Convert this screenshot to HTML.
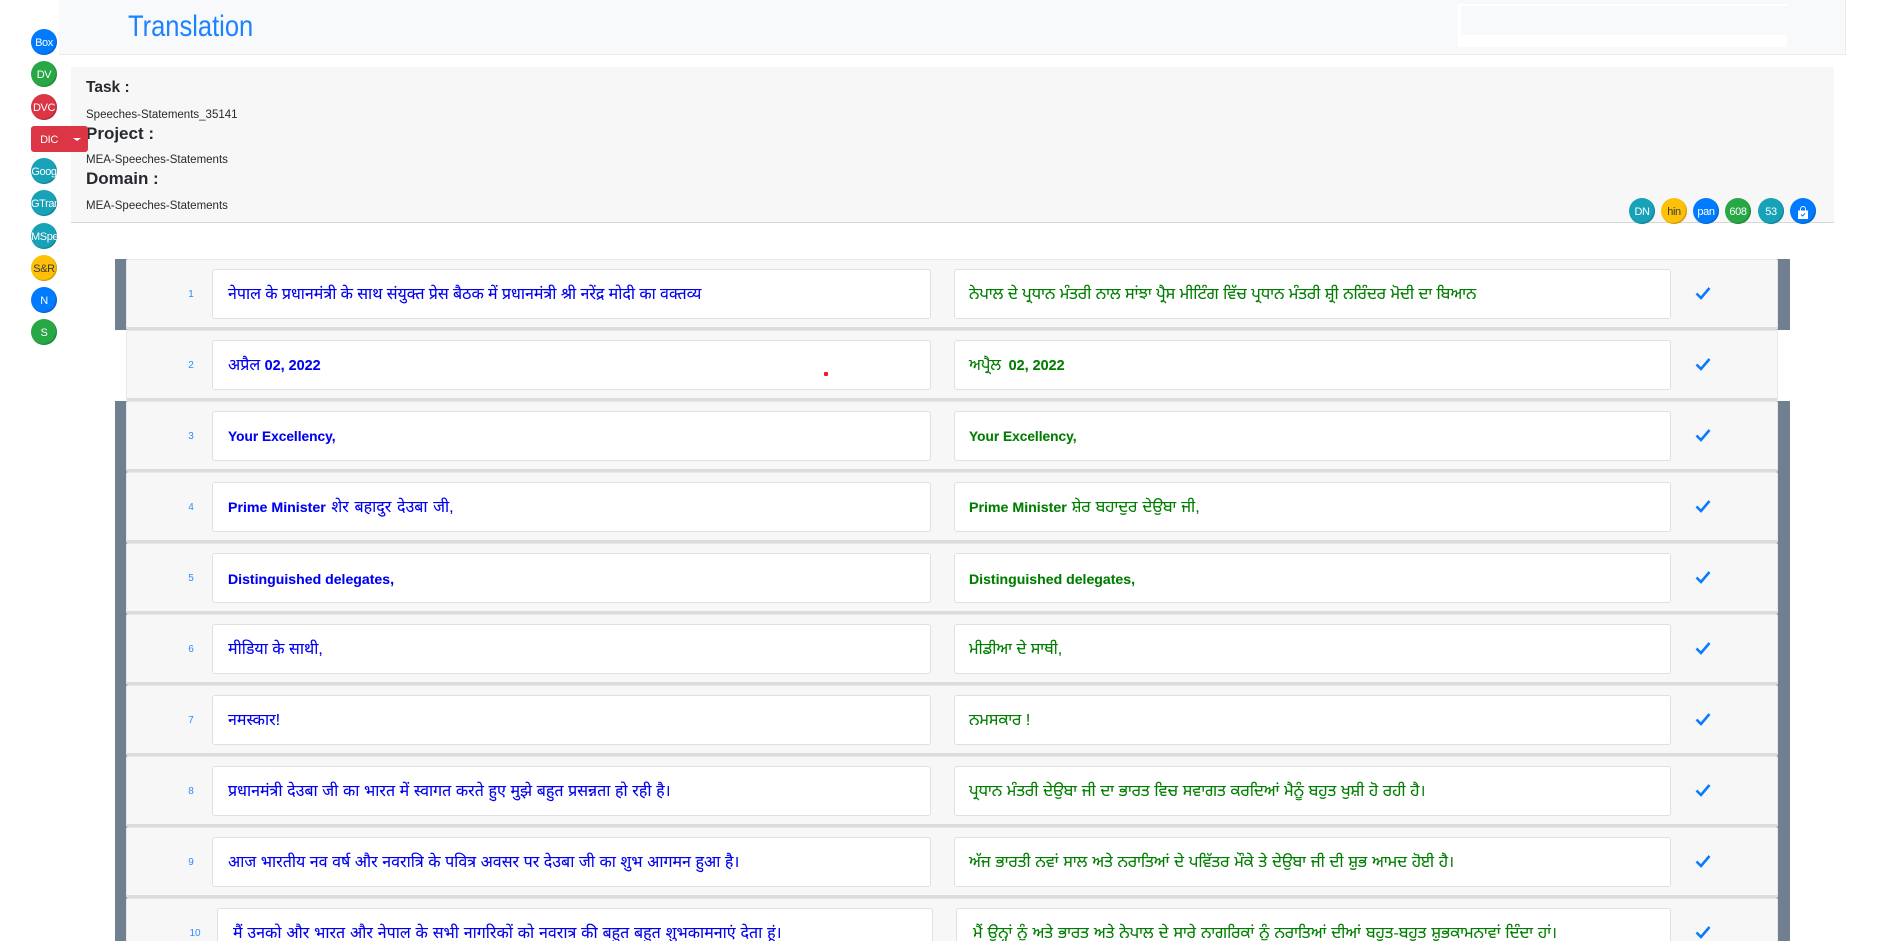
<!DOCTYPE html>
<html lang="hi">
<head>
<meta charset="utf-8">
<title>Translation</title>
<style>
html,body{margin:0;padding:0;background:#fff;width:1902px;height:941px;overflow:hidden}
body{position:relative;font-family:"Liberation Sans","DejaVu Sans",sans-serif;color:#212529}
.a{position:absolute;white-space:nowrap}
#nav{left:59px;top:0;width:1786px;height:54px;background:#f8f9fa;border-right:1px solid #e9ebee;border-bottom:1px solid #e9ebee}
#title{left:128px;top:8px;font-size:30px;line-height:38px;color:#1c82ff;transform:scaleX(.85);transform-origin:0 0}
#wb{left:1458px;top:4px;width:329px;height:43px;background:#fff}
#wi{left:1461px;top:6px;width:326px;height:29px;background:#f8f9fa}
#panel{left:71px;top:67px;width:1763px;height:156px;background:#f7f7f7;border-bottom:1px solid #d6d6d6;box-sizing:border-box}
.h{left:86px;font-size:17px;line-height:22px;font-weight:bold;color:#262a2e}
.v{left:86px;font-size:11.5px;line-height:16px;color:#262a2e}
.c{width:26px;height:26px;border-radius:50%;text-align:center;line-height:28px;font-size:11px;color:#fff;overflow:hidden;box-shadow:inset -1px -1px 1px rgba(0,0,0,.22);letter-spacing:-.4px}
.bl{background:#007bff}.gr{background:#28a745}.rd{background:#dc3545}.tl{background:#17a2b8}.yl{background:#ffc107;color:#3b3b3b}
#dic{left:31px;top:126px;width:57px;height:26px;border-radius:3px;background:#dc3545;color:#fff;font-size:11px;line-height:29px}
#dic span{position:absolute;left:4px;width:28px;text-align:center;letter-spacing:-.4px}
#dic i{position:absolute;left:42px;top:12px;border-left:4px solid transparent;border-right:4px solid transparent;border-top:3px solid #fff}
.band2{left:115px;width:1675px;background:#708090}
.card{left:126px;width:1652px;height:71px;box-sizing:border-box;background:#f7f7f7;border:1px solid #e8e8e8;border-bottom:3px solid #dcdcdc;border-radius:2px}
.box{height:50px;box-sizing:border-box;background:#fff;border:1px solid #e0e0e0;border-radius:3px}
.n{width:20px;text-align:center;font-size:10px;line-height:14px;color:#2a8cff}
.t{font-size:16px;line-height:24px;font-weight:normal;-webkit-text-stroke:.08px}
.b{font-weight:bold;font-size:14.1px}
.hi{color:#0000f0;font-family:"Liberation Sans","Noto Sans Devanagari","Lohit Devanagari","DejaVu Sans",sans-serif}
.pa{color:#007d00;font-family:"Liberation Sans","Noto Sans Gurmukhi","Lohit Gurmukhi","DejaVu Sans",sans-serif}
.ck{width:16px;height:14px}
#dot{left:824px;top:372px;width:4px;height:4px;background:#ee1c25;border-radius:1px}
</style>
</head>
<body>
<div class="a" id="nav"></div>
<div class="a" id="title">Translation</div>
<div class="a" id="wb"></div><div class="a" id="wi"></div>

<div class="a" id="panel"></div>
<div class="a h" style="top:77px;font-size:15.5px">Task :</div>
<div class="a v" style="top:107px">Speeches-Statements_35141</div>
<div class="a h" style="top:123px">Project :</div>
<div class="a v" style="top:152px">MEA-Speeches-Statements</div>
<div class="a h" style="top:168px">Domain :</div>
<div class="a v" style="top:198px">MEA-Speeches-Statements</div>

<div class="a c bl" style="left:31px;top:29px">Box</div>
<div class="a c gr" style="left:31px;top:61px">DV</div>
<div class="a c rd" style="left:31px;top:94px">DVC</div>
<div class="a" id="dic"><span>DIC</span><i></i></div>
<div class="a c tl" style="left:31px;top:158px">Goog</div>
<div class="a c tl" style="left:31px;top:190px">GTran</div>
<div class="a c tl" style="left:31px;top:223px">MSpell</div>
<div class="a c yl" style="left:31px;top:255px">S&amp;R</div>
<div class="a c bl" style="left:31px;top:287px">N</div>
<div class="a c gr" style="left:31px;top:319px">S</div>

<div class="a c tl" style="left:1629px;top:198px">DN</div>
<div class="a c yl" style="left:1661px;top:198px">hin</div>
<div class="a c bl" style="left:1693px;top:198px">pan</div>
<div class="a c gr" style="left:1725px;top:198px">608</div>
<div class="a c tl" style="left:1758px;top:198px">53</div>
<div class="a c bl" style="left:1790px;top:198px">
<svg width="26" height="26" viewBox="0 0 26 26" style="display:block"><path d="M8 12.5h10V21H8z" fill="#fff"/><path d="M10.5 12.5V11a2.5 2.5 0 0 1 5 0v1.5" fill="none" stroke="#fff" stroke-width=".9"/><path d="M11 16.5l1.5 1.5 2.6-2.8" fill="none" stroke="#007bff" stroke-width="1"/></svg>
</div>

<div class="a band2" style="top:259px;height:71px"></div>
<div class="a band2" style="top:401px;height:540px"></div>

<!-- rows -->
<div class="a card" style="top:259px"></div>
<div class="a card" style="top:330px"></div>
<div class="a card" style="top:401px"></div>
<div class="a card" style="top:472px"></div>
<div class="a card" style="top:543px"></div>
<div class="a card" style="top:614px"></div>
<div class="a card" style="top:685px"></div>
<div class="a card" style="top:756px"></div>
<div class="a card" style="top:827px"></div>
<div class="a card" style="top:898px"></div>

<div class="a box" style="left:212px;top:269px;width:719px"></div><div class="a box" style="left:954px;top:269px;width:717px"></div>
<div class="a box" style="left:212px;top:340px;width:719px"></div><div class="a box" style="left:954px;top:340px;width:717px"></div>
<div class="a box" style="left:212px;top:411px;width:719px"></div><div class="a box" style="left:954px;top:411px;width:717px"></div>
<div class="a box" style="left:212px;top:482px;width:719px"></div><div class="a box" style="left:954px;top:482px;width:717px"></div>
<div class="a box" style="left:212px;top:553px;width:719px"></div><div class="a box" style="left:954px;top:553px;width:717px"></div>
<div class="a box" style="left:212px;top:624px;width:719px"></div><div class="a box" style="left:954px;top:624px;width:717px"></div>
<div class="a box" style="left:212px;top:695px;width:719px"></div><div class="a box" style="left:954px;top:695px;width:717px"></div>
<div class="a box" style="left:212px;top:766px;width:719px"></div><div class="a box" style="left:954px;top:766px;width:717px"></div>
<div class="a box" style="left:212px;top:837px;width:719px"></div><div class="a box" style="left:954px;top:837px;width:717px"></div>
<div class="a box" style="left:217px;top:908px;width:716px"></div><div class="a box" style="left:956px;top:908px;width:715px"></div>

<div class="a n" style="left:181px;top:288px">1</div>
<div class="a n" style="left:181px;top:359px">2</div>
<div class="a n" style="left:181px;top:430px">3</div>
<div class="a n" style="left:181px;top:501px">4</div>
<div class="a n" style="left:181px;top:572px">5</div>
<div class="a n" style="left:181px;top:643px">6</div>
<div class="a n" style="left:181px;top:714px">7</div>
<div class="a n" style="left:181px;top:785px">8</div>
<div class="a n" style="left:181px;top:856px">9</div>
<div class="a n" style="left:185px;top:927px">10</div>

<div class="a t hi" style="left:228px;top:283px;word-spacing:-.15px">नेपाल के प्रधानमंत्री के साथ संयुक्त प्रेस बैठक में प्रधानमंत्री श्री नरेंद्र मोदी का वक्तव्य</div>
<div class="a t pa" style="left:969px;top:283px">ਨੇਪਾਲ ਦੇ ਪ੍ਰਧਾਨ ਮੰਤਰੀ ਨਾਲ ਸਾਂਝਾ ਪ੍ਰੈਸ ਮੀਟਿੰਗ ਵਿੱਚ ਪ੍ਰਧਾਨ ਮੰਤਰੀ ਸ਼੍ਰੀ ਨਰਿੰਦਰ ਮੋਦੀ ਦਾ ਬਿਆਨ</div>
<div class="a t hi" style="left:228px;top:354px">अप्रैल <span class="b" style="font-size:14.4px">02, 2022</span></div>
<div class="a t pa" style="left:969px;top:354px;word-spacing:3px">ਅਪ੍ਰੈਲ <span class="b" style="font-size:14.4px;word-spacing:0">02, 2022</span></div>
<div class="a t hi b" style="left:228px;top:425px;font-size:13.7px">Your Excellency,</div>
<div class="a t pa b" style="left:969px;top:425px;font-size:13.7px">Your Excellency,</div>
<div class="a t hi" style="left:228px;top:496px;word-spacing:1.2px"><span class="b" style="font-size:14.2px;word-spacing:0">Prime Minister</span> शेर बहादुर देउबा जी,</div>
<div class="a t pa" style="left:969px;top:496px;word-spacing:.5px"><span class="b" style="font-size:14.2px;word-spacing:0">Prime Minister</span> ਸ਼ੇਰ ਬਹਾਦੁਰ ਦੇਉਬਾ ਜੀ,</div>
<div class="a t hi b" style="left:228px;top:567px">Distinguished delegates,</div>
<div class="a t pa b" style="left:969px;top:567px">Distinguished delegates,</div>
<div class="a t hi" style="left:228px;top:638px">मीडिया के साथी,</div>
<div class="a t pa" style="left:969px;top:638px">ਮੀਡੀਆ ਦੇ ਸਾਥੀ,</div>
<div class="a t hi" style="left:228px;top:709px">नमस्कार!</div>
<div class="a t pa" style="left:969px;top:709px">ਨਮਸਕਾਰ !</div>
<div class="a t hi" style="left:228px;top:780px;word-spacing:.18px">प्रधानमंत्री देउबा जी का भारत में स्वागत करते हुए मुझे बहुत प्रसन्नता हो रही है।</div>
<div class="a t pa" style="left:969px;top:780px;word-spacing:.25px">ਪ੍ਰਧਾਨ ਮੰਤਰੀ ਦੇਉਬਾ ਜੀ ਦਾ ਭਾਰਤ ਵਿਚ ਸਵਾਗਤ ਕਰਦਿਆਂ ਮੈਨੂੰ ਬਹੁਤ ਖੁਸ਼ੀ ਹੋ ਰਹੀ ਹੈ।</div>
<div class="a t hi" style="left:228px;top:851px;word-spacing:.1px">आज भारतीय नव वर्ष और नवरात्रि के पवित्र अवसर पर देउबा जी का शुभ आगमन हुआ है।</div>
<div class="a t pa" style="left:969px;top:851px;word-spacing:.35px">ਅੱਜ ਭਾਰਤੀ ਨਵਾਂ ਸਾਲ ਅਤੇ ਨਰਾਤਿਆਂ ਦੇ ਪਵਿੱਤਰ ਮੌਕੇ ਤੇ ਦੇਉਬਾ ਜੀ ਦੀ ਸ਼ੁਭ ਆਮਦ ਹੋਈ ਹੈ।</div>
<div class="a t hi" style="left:233px;top:922px;word-spacing:.4px">मैं उनको और भारत और नेपाल के सभी नागरिकों को नवरात्र की बहुत बहुत शुभकामनाएं देता हूं।</div>
<div class="a t pa" style="left:973px;top:922px;word-spacing:.5px">ਮੈਂ ਉਨ੍ਹਾਂ ਨੂੰ ਅਤੇ ਭਾਰਤ ਅਤੇ ਨੇਪਾਲ ਦੇ ਸਾਰੇ ਨਾਗਰਿਕਾਂ ਨੂੰ ਨਰਾਤਿਆਂ ਦੀਆਂ ਬਹੁਤ-ਬਹੁਤ ਸ਼ੁਭਕਾਮਨਾਵਾਂ ਦਿੰਦਾ ਹਾਂ।</div>

<svg class="a ck" style="left:1695px;top:286px" viewBox="0 0 16 14"><path d="M1.5 7.5l4.5 4.5 8.5-10" fill="none" stroke="#0a7bff" stroke-width="2.6"/></svg>
<svg class="a ck" style="left:1695px;top:357px" viewBox="0 0 16 14"><path d="M1.5 7.5l4.5 4.5 8.5-10" fill="none" stroke="#0a7bff" stroke-width="2.6"/></svg>
<svg class="a ck" style="left:1695px;top:428px" viewBox="0 0 16 14"><path d="M1.5 7.5l4.5 4.5 8.5-10" fill="none" stroke="#0a7bff" stroke-width="2.6"/></svg>
<svg class="a ck" style="left:1695px;top:499px" viewBox="0 0 16 14"><path d="M1.5 7.5l4.5 4.5 8.5-10" fill="none" stroke="#0a7bff" stroke-width="2.6"/></svg>
<svg class="a ck" style="left:1695px;top:570px" viewBox="0 0 16 14"><path d="M1.5 7.5l4.5 4.5 8.5-10" fill="none" stroke="#0a7bff" stroke-width="2.6"/></svg>
<svg class="a ck" style="left:1695px;top:641px" viewBox="0 0 16 14"><path d="M1.5 7.5l4.5 4.5 8.5-10" fill="none" stroke="#0a7bff" stroke-width="2.6"/></svg>
<svg class="a ck" style="left:1695px;top:712px" viewBox="0 0 16 14"><path d="M1.5 7.5l4.5 4.5 8.5-10" fill="none" stroke="#0a7bff" stroke-width="2.6"/></svg>
<svg class="a ck" style="left:1695px;top:783px" viewBox="0 0 16 14"><path d="M1.5 7.5l4.5 4.5 8.5-10" fill="none" stroke="#0a7bff" stroke-width="2.6"/></svg>
<svg class="a ck" style="left:1695px;top:854px" viewBox="0 0 16 14"><path d="M1.5 7.5l4.5 4.5 8.5-10" fill="none" stroke="#0a7bff" stroke-width="2.6"/></svg>
<svg class="a ck" style="left:1695px;top:925px" viewBox="0 0 16 14"><path d="M1.5 7.5l4.5 4.5 8.5-10" fill="none" stroke="#0a7bff" stroke-width="2.6"/></svg>

<div class="a" id="dot"></div>
</body>
</html>
